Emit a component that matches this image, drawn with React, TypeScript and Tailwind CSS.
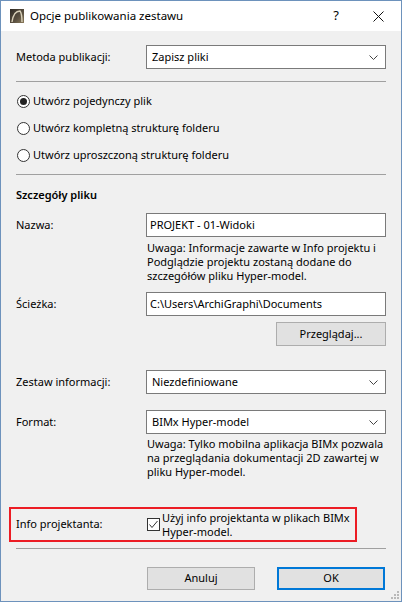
import React from "react";

const font = { fontFamily: '"Noto Sans", "Liberation Sans", sans-serif' };

function Chevron() {
  return (
    <svg width="9" height="5" viewBox="0 0 9 5" className="text-[#444]">
      <path d="M0.5 0.5 L4.5 4.5 L8.5 0.5" fill="none" stroke="currentColor" strokeWidth="1" />
    </svg>
  );
}

function Select({ value }: { value: string }) {
  return (
    <div className="flex h-[24px] w-[240px] items-center justify-between border border-[#7a7a7a] bg-white pl-[5px] pr-[7px]">
      <span>{value}</span>
      <Chevron />
    </div>
  );
}

function Input({ value }: { value: string }) {
  return (
    <div className="flex h-[24px] w-[240px] items-center border border-[#7a7a7a] bg-white pl-[3px]">
      {value}
    </div>
  );
}

function Row({ label, children, className = "" }: { label: string; children: React.ReactNode; className?: string }) {
  return (
    <div className={`flex shrink-0 items-center ${className}`}>
      <div className="w-[130px]">{label}</div>
      {children}
    </div>
  );
}

function Radio({ label, checked = false }: { label: string; checked?: boolean }) {
  return (
    <div className="flex h-[27px] items-center pl-[1px]">
      <span className="flex h-[13px] w-[13px] items-center justify-center rounded-full border border-[#333] bg-white">
        {checked && <span className="h-[7px] w-[7px] rounded-full bg-[#222]" />}
      </span>
      <span className="ml-[3px]">{label}</span>
    </div>
  );
}

function Separator({ className = "" }: { className?: string }) {
  return <div className={`h-px w-[370px] shrink-0 bg-[#a0a0a0] ${className}`} />;
}

export default function App() {
  return (
    <div
      style={font}
      className="relative flex h-[602px] w-[402px] flex-col overflow-hidden border border-[#6d92bc] bg-[#f0f0f0] text-[11px] text-black"
    >
      {/* title bar */}
      <div className="flex h-[30px] shrink-0 items-center bg-white pl-[9px]">
        <svg width="14" height="14" viewBox="0 0 14 14">
          <defs>
            <linearGradient id="ac" x1="0" y1="0" x2="1" y2="1">
              <stop offset="0" stopColor="#2e2a24" />
              <stop offset="0.6" stopColor="#5a5040" />
              <stop offset="1" stopColor="#8c7c5c" />
            </linearGradient>
          </defs>
          <rect width="14" height="14" fill="url(#ac)" />
          <path d="M2 13 C3 6 6 2 10 2 C11.5 4 12 8 12 13" fill="none" stroke="#d8d0b8" strokeWidth="1.4" />
        </svg>
        <span className="ml-[6px] text-[11.5px]">Opcje publikowania zestawu</span>
        <span className="ml-auto mr-[34px] text-[13px]">?</span>
        <svg width="11" height="11" viewBox="0 0 11 11" className="mr-[17px]">
          <path d="M0.5 0.5 L10.5 10.5 M10.5 0.5 L0.5 10.5" stroke="#111" strokeWidth="1" />
        </svg>
      </div>

      {/* body */}
      <div className="flex flex-col px-[15px]">
        <Row label="Metoda publikacji:" className="mt-[14px]">
          <Select value="Zapisz pliki" />
        </Row>

        <Separator className="mt-[12px]" />

        <div className="mt-[6px] flex flex-col">
          <Radio label="Utwórz pojedynczy plik" checked />
          <Radio label="Utwórz kompletną strukturę folderu" />
          <Radio label="Utwórz uproszczoną strukturę folderu" />
        </div>

        <Separator className="mt-[5px]" />

        <div className="mt-[11px] h-[17px] font-semibold leading-[17px]">Szczegóły pliku</div>

        <Row label="Nazwa:" className="mt-[10px]">
          <Input value="PROJEKT - 01-Widoki" />
        </Row>
        <p className="ml-[131px] mt-[4px] whitespace-nowrap leading-[14px]">
          Uwaga: Informacje zawarte w Info projektu i<br />
          Podglądzie projektu zostaną dodane do<br />
          szczegółów pliku Hyper-model.
        </p>

        <Row label="Ścieżka:" className="mt-[9px]">
          <Input value="C:\Users\ArchiGraphi\Documents" />
        </Row>
        <div className="mt-[6px] flex justify-end">
          <button className="h-[24px] w-[110px] border border-[#adadad] bg-[#e1e1e1]">Przeglądaj...</button>
        </div>

        <Row label="Zestaw informacji:" className="mt-[24px]">
          <Select value="Niezdefiniowane" />
        </Row>
        <Row label="Format:" className="mt-[16px]">
          <Select value="BIMx Hyper-model" />
        </Row>
        <p className="ml-[131px] mt-[3px] whitespace-nowrap leading-[14px]">
          Uwaga: Tylko mobilna aplikacja BIMx pozwala<br />
          na przeglądania dokumentacji 2D zawartej w<br />
          pliku Hyper-model.
        </p>

        <div className="-ml-[7px] mt-[28px] flex h-[35px] w-[348px] shrink-0 items-center border-2 border-[#ec1c24] pl-[5px]">
          <div className="w-[131px]">Info projektanta:</div>
          <span className="flex h-[13px] w-[13px] items-center justify-center border border-[#333] bg-white">
            <svg width="11" height="11" viewBox="0 0 11 11">
              <path d="M1.5 5.5 L4 8.5 L9.5 2" fill="none" stroke="#333" strokeWidth="1" />
            </svg>
          </span>
          <span className="ml-[2px] whitespace-nowrap leading-[14px]">
            Użyj info projektanta w plikach BIMx<br />
            Hyper-model.
          </span>
        </div>

        <Separator className="mt-[6px]" />

        <div className="mt-[18px] flex justify-end gap-[22px] pr-[1px]">
          <button className="h-[23px] w-[108px] border border-[#adadad] bg-[#e1e1e1]">Anuluj</button>
          <button className="h-[23px] w-[108px] border-2 border-[#0078d7] bg-[#e1e1e1]">OK</button>
        </div>
      </div>

      {/* resize grip */}
      <div className="absolute bottom-[2px] right-[2px] grid grid-cols-3 gap-[1px]">
        <span className="h-[2px] w-[2px]" />
        <span className="h-[2px] w-[2px]" />
        <span className="h-[2px] w-[2px] bg-[#b8b8b8]" />
        <span className="h-[2px] w-[2px]" />
        <span className="h-[2px] w-[2px] bg-[#b8b8b8]" />
        <span className="h-[2px] w-[2px] bg-[#b8b8b8]" />
        <span className="h-[2px] w-[2px] bg-[#b8b8b8]" />
        <span className="h-[2px] w-[2px] bg-[#b8b8b8]" />
        <span className="h-[2px] w-[2px] bg-[#b8b8b8]" />
      </div>
    </div>
  );
}
